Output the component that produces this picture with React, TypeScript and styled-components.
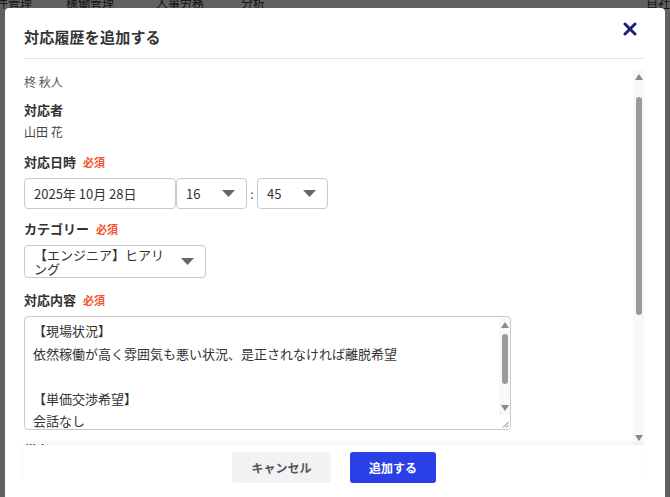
import React from "react";
import styled, { createGlobalStyle } from "styled-components";

const GlobalStyle = createGlobalStyle`
  html, body {
    margin: 0;
    padding: 0;
    background: #ffffff;
    font-family: "Noto Sans CJK JP", "Noto Sans", sans-serif;
    color: #333333;
  }
  * {
    box-sizing: border-box;
  }
`;

const Page = styled.div`
  width: 670px;
  height: 497px;
  overflow: hidden;
  background: #ffffff;
`;

const NavBar = styled.div`
  display: flex;
  align-items: flex-end;
  height: 10px;
  margin-left: -16px;
  font-size: 12px;
  line-height: 14px;
  color: #333333;
  overflow: hidden;
`;

const NavItem = styled.span<{ gap?: number }>`
  margin-right: ${({ gap }) => gap ?? 40}px;
  white-space: nowrap;
`;

const NavSpacer = styled.span`
  flex: 1;
`;

const Overlay = styled.div`
  position: fixed;
  inset: 0;
  background: rgba(0, 0, 0, 0.62);
  padding: 8px 5px 0;
  display: flex;
  justify-content: center;
  align-items: flex-start;
`;

const Modal = styled.div`
  width: 660px;
  height: 520px;
  background: #ffffff;
  border-radius: 4px 4px 0 0;
  display: flex;
  flex-direction: column;
`;

const Header = styled.div`
  display: flex;
  align-items: center;
  justify-content: space-between;
  height: 51px;
  flex-shrink: 0;
  margin: 0 21px 0 19px;
  padding-top: 6px;
  border-bottom: 1px solid #e4e4e4;
`;

const Title = styled.h2`
  margin: 0;
  font-size: 15px;
  font-weight: 700;
  color: #333333;
  letter-spacing: 0.2px;
`;

const CloseButton = styled.button`
  border: none;
  background: none;
  padding: 0;
  margin: -14px 6px 0 0;
  width: 16px;
  height: 16px;
  display: flex;
  align-items: center;
  justify-content: center;
  cursor: pointer;
`;

const BodyRow = styled.div`
  display: flex;
  height: 375px;
  flex-shrink: 0;
  margin: 11px 21px 0 19px;
`;

const BodyContent = styled.div`
  flex: 1;
  overflow: hidden;
  padding-top: 3px;
`;

/* drawn scrollbar: the capture shows classic arrows + pill thumb */
const Track = styled.div<{ bottomGap?: number }>`
  width: 11px;
  flex-shrink: 0;
  display: flex;
  flex-direction: column;
  background: #f8f8f8;
  margin-bottom: ${({ bottomGap }) => bottomGap ?? 0}px;
`;

const ArrowCell = styled.div`
  height: 14px;
  display: flex;
  align-items: center;
  justify-content: center;
  padding-left: 1px;
`;

const ThumbArea = styled.div`
  flex: 1;
  display: flex;
  flex-direction: column;
  align-items: flex-end;
  padding-right: 2px;
`;

const Thumb = styled.div<{ offset: number; size: number }>`
  width: 6px;
  margin-top: ${({ offset }) => offset}px;
  height: ${({ size }) => size}px;
  border-radius: 3px;
  background: #9a9a9a;
`;

const Arrow = ({ down }: { down?: boolean }) => (
  <svg width="8" height="6" viewBox="0 0 8 6">
    <path d={down ? "M0 0 H8 L4 6 Z" : "M0 6 H8 L4 0 Z"} fill="#8a8a8a" />
  </svg>
);

const ScrollBar = ({ offset, size }: { offset: number; size: number }) => (
  <Track>
    <ArrowCell>
      <Arrow />
    </ArrowCell>
    <ThumbArea>
      <Thumb offset={offset} size={size} />
    </ThumbArea>
    <ArrowCell>
      <Arrow down />
    </ArrowCell>
  </Track>
);

const Owner = styled.div`
  font-size: 12px;
  line-height: 18px;
  color: #555555;
`;

const Field = styled.div<{ top: number }>`
  margin-top: ${({ top }) => top}px;
`;

const Label = styled.div`
  display: flex;
  align-items: center;
  gap: 7px;
  font-size: 13px;
  line-height: 20px;
  font-weight: 700;
  color: #333333;
  margin-bottom: 6px;
`;

const Required = styled.span`
  font-size: 11px;
  font-weight: 700;
  color: #f2542d;
`;

const Value = styled.div`
  font-size: 12px;
  line-height: 18px;
  color: #444444;
  margin-top: -3px;
`;

const DateRow = styled.div`
  display: flex;
  align-items: center;
`;

const Box = styled.div<{ w: number; h: number }>`
  width: ${({ w }) => w}px;
  height: ${({ h }) => h}px;
  border: 1px solid #c9c9c9;
  border-radius: 4px;
  background: #ffffff;
  display: flex;
  align-items: center;
  justify-content: space-between;
  padding: 0 11px 0 9px;
  font-size: 13px;
  color: #333333;
`;

const Colon = styled.span`
  width: 10px;
  text-align: center;
  font-size: 12px;
  color: #555555;
`;

const SelectText = styled.span`
  font-size: 13px;
  line-height: 14px;
  width: 130px;
`;

const Caret = () => (
  <svg width="13" height="7" viewBox="0 0 13 7">
    <path d="M0 0 H13 L6.5 7 Z" fill="#666666" />
  </svg>
);

const TextFrame = styled.div`
  display: flex;
  width: 487px;
  height: 114px;
  border: 1px solid #c9c9c9;
  border-radius: 4px;
  overflow: hidden;
  background: #ffffff;
`;

const TextArea = styled.textarea`
  flex: 1;
  display: block;
  border: none;
  padding: 3px 8px;
  font-family: "Noto Sans CJK JP", "Noto Sans", sans-serif;
  font-size: 13px;
  line-height: 22.5px;
  color: #333333;
  resize: none;
  outline: none;
  overflow: hidden;
  background: transparent;
`;

const SideColumn = styled.div`
  display: flex;
  flex-direction: column;
  width: 11px;
`;

const Corner = styled.div`
  height: 14px;
  display: flex;
  align-items: flex-end;
  justify-content: flex-end;
  padding: 0 1px 1px 0;
  background: #ffffff;
`;

const TextBar = styled.div`
  flex: 1;
  display: flex;
  margin-top: 1px;
`;

const Footer = styled.div`
  display: flex;
  justify-content: center;
  gap: 19px;
  padding-top: 7px;
  box-shadow: 0 -3px 5px rgba(0, 0, 0, 0.04);
  margin: 0 21px 0 19px;
`;

const Button = styled.button<{ primary?: boolean }>`
  height: 31px;
  padding: 0;
  width: ${({ primary }) => (primary ? 86 : 99)}px;
  border: none;
  border-radius: 3px;
  background: ${({ primary }) => (primary ? "#2a3fe6" : "#f2f2f4")};
  color: ${({ primary }) => (primary ? "#ffffff" : "#555555")};
  font-family: "Noto Sans CJK JP", "Noto Sans", sans-serif;
  font-size: 12px;
  font-weight: 700;
  cursor: pointer;
`;

const memo = `【現場状況】
依然稼働が高く雰囲気も悪い状況、是正されなければ離脱希望

【単価交渉希望】
会話なし

【次回面談】
来月中旬に再度ヒアリング予定`;

const MemoBox = ({ value, thumb }: { value: string; thumb: [number, number] }) => (
  <TextFrame>
    <TextArea readOnly defaultValue={value} />
    <SideColumn>
      <TextBar>
        <ScrollBar offset={thumb[0]} size={thumb[1]} />
      </TextBar>
      <Corner>
        <svg width="7" height="7" viewBox="0 0 7 7">
          <path
            d="M6.5 1 L1 6.5 M6.5 4 L4 6.5"
            stroke="#777777"
            strokeWidth="1"
          />
        </svg>
      </Corner>
    </SideColumn>
  </TextFrame>
);

export default function App() {
  return (
    <Page>
      <GlobalStyle />
      <NavBar>
        <NavItem gap={34}>案件管理</NavItem>
        <NavItem gap={42}>稼働管理</NavItem>
        <NavItem gap={37}>人事労務</NavItem>
        <NavItem>分析</NavItem>
        <NavSpacer />
        <NavItem gap={0}>自社</NavItem>
      </NavBar>
      <Overlay>
        <Modal>
          <Header>
            <Title>対応履歴を追加する</Title>
            <CloseButton aria-label="閉じる">
              <svg width="14" height="14" viewBox="0 0 14 14">
                <path
                  d="M2 2 L12 12 M12 2 L2 12"
                  stroke="#1e1f7c"
                  strokeWidth="3"
                  strokeLinecap="round"
                />
              </svg>
            </CloseButton>
          </Header>
          <BodyRow>
            <BodyContent>
              <Owner>柊 秋人</Owner>
              <Field top={9}>
                <Label>対応者</Label>
                <Value>山田 花</Value>
              </Field>
              <Field top={11}>
                <Label>
                  対応日時<Required>必須</Required>
                </Label>
                <DateRow>
                  <Box w={152} h={31}>2025年 10月 28日</Box>
                  <Box w={71} h={31}>
                    16
                    <Caret />
                  </Box>
                  <Colon>:</Colon>
                  <Box w={71} h={31}>
                    45
                    <Caret />
                  </Box>
                </DateRow>
              </Field>
              <Field top={10}>
                <Label>
                  カテゴリー<Required>必須</Required>
                </Label>
                <Box w={182} h={33}>
                  <SelectText>【エンジニア】ヒアリング</SelectText>
                  <Caret />
                </Box>
              </Field>
              <Field top={12}>
                <Label>
                  対応内容<Required>必須</Required>
                </Label>
                <MemoBox value={memo} thumb={[2, 50]} />
              </Field>
              <Field top={10}>
                <Label>備考</Label>
              </Field>
            </BodyContent>
            <ScrollBar offset={13} size={218} />
          </BodyRow>
          <Footer>
            <Button>キャンセル</Button>
            <Button primary>追加する</Button>
          </Footer>
        </Modal>
      </Overlay>
    </Page>
  );
}
